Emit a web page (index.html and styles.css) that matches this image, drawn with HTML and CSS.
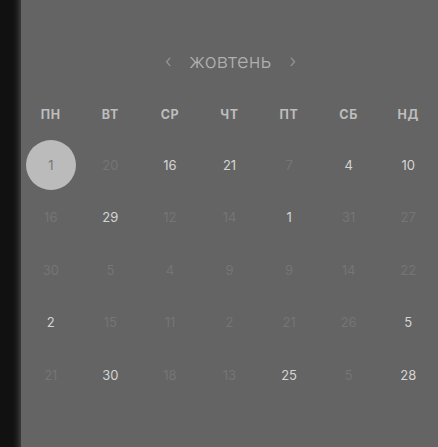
FILE: index.html
```html
<!DOCTYPE html>
<html lang="uk">
<head>
<meta charset="utf-8">
<link rel="stylesheet" href="styles.css">
</head>
<body>
<div class="app">
  <div class="side"></div>
  <main class="panel">
    <div class="title">
      <span class="arrow prev">‹</span>
      <span class="month">жовтень</span>
      <span class="arrow next">›</span>
    </div>
    <div class="grid">
      <div class="wd">ПН</div><div class="wd">ВТ</div><div class="wd">СР</div><div class="wd">ЧТ</div><div class="wd">ПТ</div><div class="wd">СБ</div><div class="wd">НД</div>

      <div class="d sel"><span class="dot">1</span></div><div class="d dim">20</div><div class="d">16</div><div class="d">21</div><div class="d dim">7</div><div class="d">4</div><div class="d">10</div>

      <div class="d dim">16</div><div class="d">29</div><div class="d dim">12</div><div class="d dim">14</div><div class="d">1</div><div class="d dim">31</div><div class="d dim">27</div>

      <div class="d dim">30</div><div class="d dim">5</div><div class="d dim">4</div><div class="d dim">9</div><div class="d dim">9</div><div class="d dim">14</div><div class="d dim">22</div>

      <div class="d">2</div><div class="d dim">15</div><div class="d dim">11</div><div class="d dim">2</div><div class="d dim">21</div><div class="d dim">26</div><div class="d">5</div>

      <div class="d dim">21</div><div class="d">30</div><div class="d dim">18</div><div class="d dim">13</div><div class="d">25</div><div class="d dim">5</div><div class="d">28</div>
    </div>
  </main>
</div>
</body>
</html>
```

FILE: styles.css
```css
html, body {
  margin: 0;
  padding: 0;
  background: #111111;
  font-family: Inter, "Noto Sans", sans-serif;
}

.app {
  display: flex;
  width: 438px;
  height: 447px;
  overflow: hidden;
}

.side {
  width: 21px;
  flex: none;
  background: linear-gradient(to right, #111111 0, #111111 13px, #1e1e1e 17px, #3a3a3a 21px);
}

.panel {
  flex: 1;
  background: #646464;
  padding-top: 49px;
}

.title {
  height: 24px;
  line-height: 24px;
  display: flex;
  justify-content: center;
  align-items: center;
  gap: 15px;
  margin-bottom: 18px;
  padding-left: 2px;
}

.month {
  font-size: 20px;
  font-weight: 300;
  color: #b0b0b0;
  letter-spacing: 0.2px;
}

.arrow {
  font-size: 18px;
  font-weight: 300;
  color: #9a9a9a;
  width: 12px;
  text-align: center;
}

.grid {
  display: grid;
  grid-template-columns: repeat(7, 1fr);
  grid-template-rows: 47.5px repeat(5, 52.5px);
}

.wd {
  display: flex;
  align-items: center;
  justify-content: center;
  font-size: 12.5px;
  font-weight: 700;
  letter-spacing: 0.6px;
  color: #bdbdbd;
}

.d {
  display: flex;
  align-items: center;
  justify-content: center;
  font-size: 13px;
  color: #d4d4d4;
}

.d.dim {
  color: #757575;
}

.dot {
  width: 50px;
  height: 50px;
  border-radius: 50%;
  background: #bbbbbb;
  color: #777777;
  display: flex;
  align-items: center;
  justify-content: center;
}
```
